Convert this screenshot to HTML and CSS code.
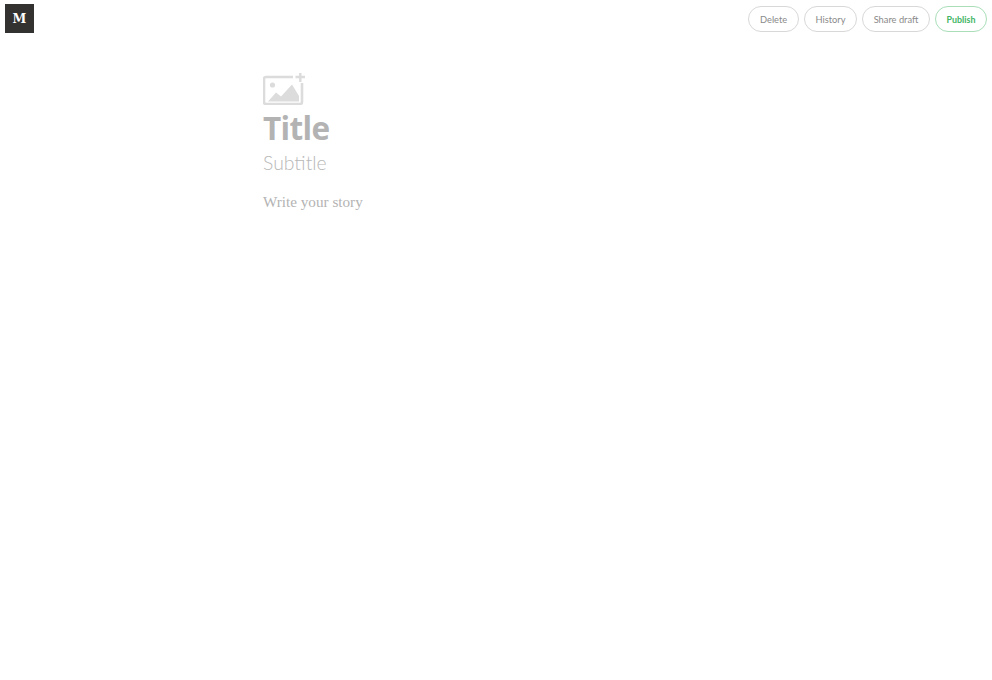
FILE: index.html
```html
<!DOCTYPE html>
<html lang="en">
<head>
<meta charset="utf-8">
<title>Editor</title>
<link rel="stylesheet" href="styles.css">
</head>
<body>
<header class="topbar">
  <a class="logo">M</a>
  <nav class="actions">
    <button class="btn">Delete</button>
    <button class="btn">History</button>
    <button class="btn">Share draft</button>
    <button class="btn btn-green">Publish</button>
  </nav>
</header>
<main class="editor">
  <svg class="add-image" width="43" height="32" viewBox="0 0 43 32" aria-hidden="true">
    <path d="M30 4H3A2 2 0 0 0 1 6V29A2 2 0 0 0 3 31H37A2 2 0 0 0 39 29V10" fill="none" stroke="#dcdcdc" stroke-width="2.600"/>
    <circle cx="9.500" cy="12" r="2.600" fill="#dcdcdc"/>
    <path d="M5 28.500L13 19.500L18 23.500L29 11.500L36 23V28.500Z" fill="#dcdcdc"/>
    <path d="M32.500 4H42M37.300 0V9" fill="none" stroke="#dcdcdc" stroke-width="2.400"/>
  </svg>
  <h1 class="title">Title</h1>
  <h2 class="subtitle">Subtitle</h2>
  <p class="story">Write your story</p>
</main>
</body>
</html>
```
FILE: styles.css
```css
* { box-sizing: border-box; }
html, body { margin: 0; height: 100%; background: #fff; }
body { overflow: hidden; }
.topbar {
  display: flex;
  justify-content: space-between;
  align-items: flex-start;
  padding: 4px 5px 0;
}
.logo {
  width: 29px;
  height: 29px;
  background: #333230;
  color: #fff;
  font: 700 12.500px/29px "DejaVu Serif", serif;
  text-align: center;
}
.actions { display: flex; gap: 5px; padding-top: 2px; }
.btn {
  height: 26px;
  padding: 1px 10.600px 0;
  background: #fff;
  border: 1px solid #d8d8d8;
  border-radius: 13px;
  color: #8a8a8a;
  font: 400 9.300px/23px "Lato", sans-serif;
}
.btn-green { border-color: #a9deb9; color: #3fb565; font-weight: 700; font-size: 8.900px; }
.editor {
  display: flex;
  flex-direction: column;
  align-items: flex-start;
  padding: 40px 0 0 263px;
}
.add-image { display: block; }
.title {
  margin: 1px 0 0;
  color: #b3b3b3;
  font: 700 31.500px/44px "Open Sans", sans-serif;
  letter-spacing: -0.65px;
}
.subtitle {
  margin: 0;
  color: #b8b8b8;
  font: 300 19.400px/26px "Lato", sans-serif;
}
.story {
  margin: 16px 0 0;
  color: #b3b3b3;
  font: 400 15.200px/20px "Liberation Serif", serif;
}
```
